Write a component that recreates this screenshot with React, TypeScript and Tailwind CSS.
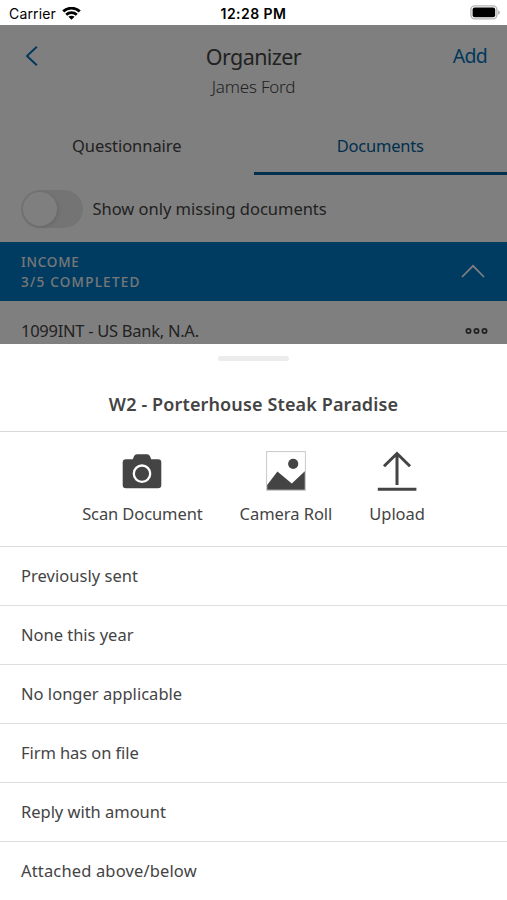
import type { ReactNode } from "react";

const options = [
  { label: "Previously sent", tracking: "tracking-[0.03px]" },
  { label: "None this year", tracking: "tracking-[-0.02px]" },
  { label: "No longer applicable", tracking: "tracking-[0.02px]" },
  { label: "Firm has on file", tracking: "tracking-[-0.08px]" },
  { label: "Reply with amount", tracking: "tracking-[-0.03px]" },
  { label: "Attached above/below", tracking: "tracking-[0.15px]" },
];

function StatusBar() {
  return (
    <div className="grid h-[25px] shrink-0 grid-cols-3 items-center bg-white pt-[3px] font-['Inter',sans-serif] text-black">
      <div className="flex items-center gap-[6px] pl-[9px]">
        <span className="text-[14px] leading-none tracking-[0.15px]">Carrier</span>
        <svg width="19" height="14" viewBox="0 0 19 14" fill="none" stroke="black" strokeWidth="2.8">
          <path d="M1.2 4.4C5.9 0.1 13.1 0.1 17.8 4.4" />
          <path d="M4.2 7.7C7.2 5 11.8 5 14.8 7.7" />
          <path d="M9.5 12.8L6.4 9.8C8.1 8.3 10.9 8.3 12.6 9.8Z" fill="black" stroke="none" />
        </svg>
      </div>
      <span className="text-center text-[14px] leading-none font-semibold tracking-[0.45px] whitespace-nowrap">12:28 PM</span>
      <div className="flex justify-end pr-[7px] pb-[3px]">
        <svg width="30" height="15" viewBox="0 0 30 15">
          <rect x="0.9" y="0.9" width="26" height="13" rx="3.8" fill="white" stroke="#b4b4b4" strokeWidth="1.4" />
          <rect x="2.6" y="2.6" width="22.6" height="9.6" rx="2" fill="black" />
          <path d="M28.2 5.2Q29.9 6 29.9 7.4Q29.9 8.9 28.2 9.7Z" fill="#aaa" />
        </svg>
      </div>
    </div>
  );
}

function Organizer() {
  return (
    <div className="relative flex h-[319px] shrink-0 flex-col overflow-hidden bg-white text-[#444]">
      <div className="grid h-[87px] shrink-0 grid-cols-[1fr_auto_1fr] items-start">
        <svg className="mt-[20px] ml-[24px]" width="14" height="22" viewBox="0 0 14 22" fill="none" stroke="#0070b8" strokeWidth="1.9">
          <path d="M12.8 1.8L3 11L12.8 20.2" />
        </svg>
        <div className="flex flex-col items-center pt-[18px]">
          <h1 className="text-[21.5px] leading-[28px] tracking-[-0.6px]">Organizer</h1>
          <p className="mt-[4px] text-[17px] leading-[24px] font-light tracking-[-0.2px]">James Ford</p>
        </div>
        <button className="mt-[18px] mr-[20px] justify-self-end text-[19.5px] leading-[26px] tracking-[-0.7px] text-[#0070b8]">Add</button>
      </div>
      <div className="grid h-[63px] shrink-0 grid-cols-2 text-[16.5px]">
        <div className="flex items-center justify-center pt-[5px]">
          <span className="tracking-[-0.05px]">Questionnaire</span>
        </div>
        <div className="flex items-center justify-center border-b-[3px] border-[#00609c] pt-[8px] text-[#00609c]">
          <span className="tracking-[-0.2px]">Documents</span>
        </div>
      </div>
      <div className="flex h-[67px] shrink-0 items-center gap-[10px] pl-[20.5px]">
        <div className="flex h-[38px] w-[62px] items-center rounded-full bg-[#e8e8e8] p-[2px]">
          <div className="size-[34px] rounded-full bg-white shadow-[1px_1px_4px_rgba(0,0,0,0.12)]" />
        </div>
        <span className="pt-px text-[16.5px] tracking-[-0.02px]">Show only missing documents</span>
      </div>
      <div className="flex h-[59px] shrink-0 items-center justify-between bg-[#0078c4] pr-[22px] pl-[21px] text-white">
        <div className="pt-[2px] text-[13.5px] leading-[19.5px] font-medium text-[#eee]">
          <div className="tracking-[0.75px]">INCOME</div>
          <div className="tracking-[1.25px]">3/5 COMPLETED</div>
        </div>
        <svg className="mb-[2px]" width="24" height="14" viewBox="0 0 24 14" fill="none" stroke="white" strokeWidth="1.7">
          <path d="M1 13L12 1.8L23 13" />
        </svg>
      </div>
      <div className="flex h-[60px] shrink-0 items-center justify-between pr-[19px] pl-[21px]">
        <span className="text-[16.5px] tracking-[-0.27px]">1099INT - US Bank, N.A.</span>
        <svg width="23" height="8" viewBox="0 0 23 8" fill="none" stroke="#444" strokeWidth="1.8">
          <circle cx="3.5" cy="4" r="2.1" />
          <circle cx="11.5" cy="4" r="2.1" />
          <circle cx="19.5" cy="4" r="2.1" />
        </svg>
      </div>
      <div className="absolute inset-0 bg-black/50" />
    </div>
  );
}

function Action({ label, className, children }: { label: string; className: string; children: ReactNode }) {
  return (
    <button className="flex flex-col items-center">
      {children}
      <span className={`mt-[11px] text-[16.5px] leading-[24px] whitespace-nowrap ${className}`}>{label}</span>
    </button>
  );
}

function ActionSheet() {
  return (
    <div className="flex flex-1 flex-col bg-white text-[#444]">
      <div className="flex h-[34px] shrink-0 justify-center pt-[12px]">
        <div className="h-[5px] w-[71px] rounded-full bg-[#ececec]" />
      </div>
      <h2 className="flex h-[54px] shrink-0 items-center justify-center border-b border-[#d8d8d8] text-[18px] font-semibold tracking-[0.13px]">
        W2 - Porterhouse Steak Paradise
      </h2>
      <div className="flex h-[115px] shrink-0 justify-center gap-[37px] border-b border-[#dcdcdc] pt-[19px]">
        <Action label="Scan Document" className="tracking-[-0.1px]">
          <svg width="40" height="40" viewBox="0 0 40 40">
            <path fill="#444" d="M4 8.3H10.8L12 5.2Q12.8 3.2 15 3.2H25Q27.2 3.2 28 5.2L29.2 8.3H36Q39.3 8.3 39.3 11.6V34Q39.3 37.3 36 37.3H4Q0.7 37.3 0.7 34V11.6Q0.7 8.3 4 8.3Z" />
            <circle cx="20" cy="22.7" r="8.2" fill="none" stroke="white" strokeWidth="2.3" />
          </svg>
        </Action>
        <Action label="Camera Roll" className="tracking-[-0.05px]">
          <svg width="40" height="40" viewBox="0 0 40 40">
            <rect x="0.6" y="0.6" width="38.8" height="38.8" fill="white" stroke="#c8c8c8" strokeWidth="1" />
            <circle cx="27.2" cy="12.8" r="5.1" fill="#444" />
            <path fill="#444" d="M1.2 38.8V34L11.4 20.6L25.8 32.5L38.8 20.3V38.8Z" />
          </svg>
        </Action>
        <Action label="Upload" className="tracking-[-0.05px]">
          <svg width="40" height="40" viewBox="0 0 40 40" fill="none" stroke="#444" strokeWidth="3">
            <path d="M0.8 38.2H39.4M20 34V2.5M7 15.3L20 2.5L33 15.3" />
          </svg>
        </Action>
      </div>
      <ul>
        {options.map((o) => (
          <li key={o.label} className="flex h-[59px] items-center border-b border-[#dedede] pl-[21px] text-[16.5px] last:border-b-0">
            <span className={o.tracking}>{o.label}</span>
          </li>
        ))}
      </ul>
    </div>
  );
}

export default function App() {
  return (
    <div className="flex h-[900px] w-full flex-col overflow-hidden bg-white font-['Noto_Sans','Open_Sans',sans-serif]">
      <StatusBar />
      <Organizer />
      <ActionSheet />
    </div>
  );
}
